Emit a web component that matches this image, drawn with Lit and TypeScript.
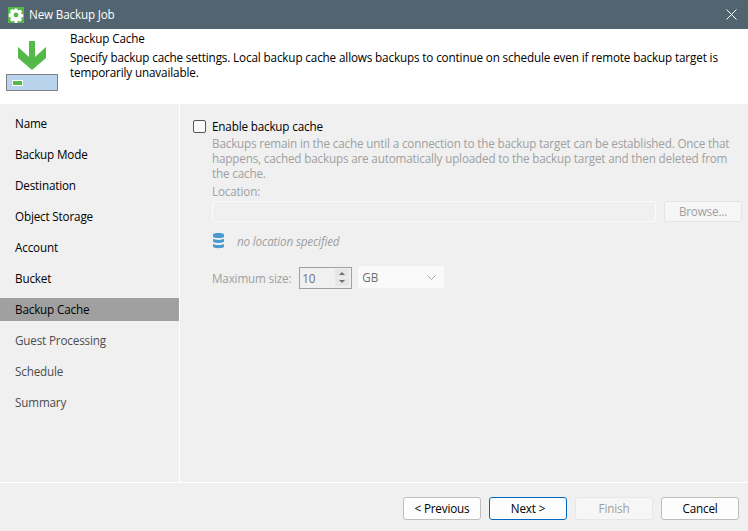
import { LitElement, html, css, svg } from "lit";
import { customElement } from "lit/decorators.js";

const STEPS: [string, string][] = [
  ["Name", "done"], ["Backup Mode", "done"], ["Destination", "done"], ["Object Storage", "done"],
  ["Account", "done"], ["Bucket", "done"], ["Backup Cache", "active"],
  ["Guest Processing", "todo"], ["Schedule", "todo"], ["Summary", "todo"],
];

@customElement("app-root")
export class AppRoot extends LitElement {
  static styles = css`
    :host { display: flex; flex-direction: column; width: 748px; height: 531px; background: #f0f0f0;
      font-family: "Open Sans", "Noto Sans", sans-serif; font-size: 11.7px; color: #000; overflow: hidden; letter-spacing: -0.17px; }
    .title { height: 29px; flex: none; background: #51646f; color: #fff; display: flex; align-items: center; padding: 0 11px 0 8px; gap: 5px; }
    .title .t { flex: 1; line-height: 29px; }
    .appicon { width: 16px; height: 16px; display: block; }
    .close { width: 11px; height: 11px; display: block; }
    .head { height: 75px; flex: none; background: #fff; display: flex; padding: 0 0 0 6px; }
    .hicon { width: 64px; flex: none; }
    .htext { flex: 1; padding-top: 2px; padding-right: 20px; line-height: 15px; letter-spacing: -0.135px; }
    .htext .h1 { margin-bottom: 4px; line-height: 15px; }
    .main { flex: 1; display: flex; min-height: 0; }
    .side { width: 179px; flex: none; padding-top: 8px; display: flex; flex-direction: column; gap: 8px; border-right: 1px solid #fff; }
    .step { height: 23px; line-height: 23px; padding-left: 15px; color: #000; }
    .step.todo { color: #4d4d4d; }
    .step.active { background: #a0a0a0; }
    .content { flex: 1; padding: 15px 6px 0 13px; color: #a0a0a0; display: flex; flex-direction: column; }
    .check { display: flex; align-items: center; gap: 6px; color: #000; height: 14px; line-height: 13px; }
    .box { width: 11px; height: 11px; border: 1px solid #555; border-radius: 2px; background: #fbfbfb; flex: none; }
    .body { padding-left: 19px; display: flex; flex-direction: column; }
    .desc { margin: 3px 0 0; line-height: 15px; padding-right: 6px; }
    .loc { line-height: 15px; margin-top: 3px; }
    .pathrow { display: flex; gap: 8px; margin-top: 2px; height: 21px; }
    .path { flex: 1; box-sizing: border-box; border: 1px solid #fafafa; border-radius: 2px; background: #f0f0f0; }
    .browse { width: 78px; box-sizing: border-box; border: 1px solid #e4e4e4; border-radius: 3px; background: #f6f6f6; display: flex; align-items: center; justify-content: center; padding-bottom: 1px; }
    .status { display: flex; align-items: center; gap: 13px; margin-top: 11px; height: 16px; padding-left: 1px; }
    .db { width: 11px; height: 16px; display: block; flex: none; }
    .status i { font-style: italic; }
    .sizerow { display: flex; align-items: center; margin-top: 17px; height: 23px; }
    .spin { width: 53px; height: 22px; box-sizing: border-box; border: 1px solid #a0a0a0; margin-left: 8px; display: flex; align-items: center; justify-content: space-between; padding: 0 2px 0 1px; color: #707070; }
    .spin span { padding-left: 1px; }
    .arrows { display: flex; flex-direction: column; gap: 1px; width: 14px; }
    .arrows svg { display: block; width: 14px; height: 8px; }
    .combo { width: 86px; height: 22px; box-sizing: border-box; background: #f9f9f9; border-radius: 2px; margin-left: 6px; margin-top: -1px; display: flex; align-items: center; justify-content: space-between; padding: 0 8px 0 4px; color: #707070; }
    .combo svg { width: 9px; height: 5px; display: block; }
    .foot { height: 49px; flex: none; border-top: 1px solid #fff; display: flex; justify-content: flex-end; gap: 8px; padding: 14px 9px 0 0; box-sizing: border-box; }
    .btn { width: 78px; height: 23px; box-sizing: border-box; background: #fdfdfd; border: 1px solid #bebebe; border-radius: 3px; display: flex; align-items: center; justify-content: center; padding-bottom: 2px; }
    .btn.primary { border-color: #0067c0; }
    .btn.off { background: #f6f6f6; border-color: #e6e6e6; color: #a0a0a0; }
  `;

  render() {
    return html`
      <div class="title">
        <svg class="appicon" viewBox="0 0 16 16">
          <rect width="16" height="16" fill="#54b948"/>
          <path fill="#fff" fill-rule="evenodd" d="M6.6 1.5h2.8l.3 1.7 1 .4 1.4-1 2 2-1 1.4.4 1 1.7.3v2.8l-1.7.3-.4 1 1 1.4-2 2-1.4-1-1 .4-.3 1.7H6.6l-.3-1.7-1-.4-1.4 1-2-2 1-1.4-.4-1-1.7-.3V6.6l1.7-.3.4-1-1-1.4 2-2 1.4 1 1-.4zM8 5.6a2.4 2.4 0 1 0 0 4.8 2.4 2.4 0 0 0 0-4.8z"/>
        </svg>
        <span class="t">New Backup Job</span>
        <svg class="close" viewBox="0 0 11 11"><path d="M.5.5l10 10M10.5.5l-10 10" stroke="#fff" stroke-width="1" fill="none"/></svg>
      </div>
      <div class="head">
        <svg class="hicon" viewBox="0 0 64 75" width="64" height="75">
          <path fill="#54b948" d="M23 12h6v16l11-10v11L26 41 12 29V18l11 10z"/>
          <rect x="0.5" y="45.5" width="51" height="16" fill="#b9d3ec" stroke="#7f7f7f"/>
          <rect x="6.5" y="51.5" width="10" height="5" fill="#54b948" stroke="#fff"/>
        </svg>
        <div class="htext">
          <div class="h1">Backup Cache</div>
          <div>Specify backup cache settings. Local backup cache allows backups to continue on schedule even if remote backup target is temporarily unavailable.</div>
        </div>
      </div>
      <div class="main">
        <div class="side">
          ${STEPS.map(([n, s]) => html`<div class="step ${s}">${n}</div>`)}
        </div>
        <div class="content">
          <div class="check"><div class="box"></div><span>Enable backup cache</span></div>
          <div class="body">
            <p class="desc">Backups remain in the cache until a connection to the backup target can be established. Once that happens, cached backups are automatically uploaded to the backup target and then deleted from the cache.</p>
            <div class="loc">Location:</div>
            <div class="pathrow"><div class="path"></div><div class="browse">Browse...</div></div>
            <div class="status">
              <svg class="db" viewBox="0 0 11 16">
                <path fill="#4a9ad0" d="M0 1.5C0 .5 2.5 0 5.5 0S11 .5 11 1.5V4c-1 .8-3 1.1-5.5 1.1S1 4.800 0 4z"/>
                ${[5.8, 11].map((y) => svg`<path fill="#4a9ad0" d="M0 ${y}c1 .8 3 1.100 5.500 1.100S10 ${y + 0.8} 11 ${y}v2.800c0 .8-2.500 1.400-5.500 1.400S0 ${y + 3.6} 0 ${y + 2.8}z"/>`)}
              </svg>
              <i>no location specified</i>
            </div>
            <div class="sizerow">
              <span>Maximum size:</span>
              <div class="spin"><span>10</span>
                <div class="arrows">
                  <svg viewBox="0 0 14 8"><rect width="14" height="8" fill="#e6e6e6"/><path d="M4 6l3-3 3 3z" fill="#707070"/></svg>
                  <svg viewBox="0 0 14 8"><rect width="14" height="8" fill="#e6e6e6"/><path d="M4 2l3 3 3-3z" fill="#707070"/></svg>
                </div>
              </div>
              <div class="combo"><span>GB</span><svg viewBox="0 0 9 5"><path d="M.5.5l4 4 4-4" fill="none" stroke="#a8a8a8"/></svg></div>
            </div>
          </div>
        </div>
      </div>
      <div class="foot">
        <div class="btn">&lt; Previous</div>
        <div class="btn primary">Next &gt;</div>
        <div class="btn off">Finish</div>
        <div class="btn">Cancel</div>
      </div>
    `;
  }
}
